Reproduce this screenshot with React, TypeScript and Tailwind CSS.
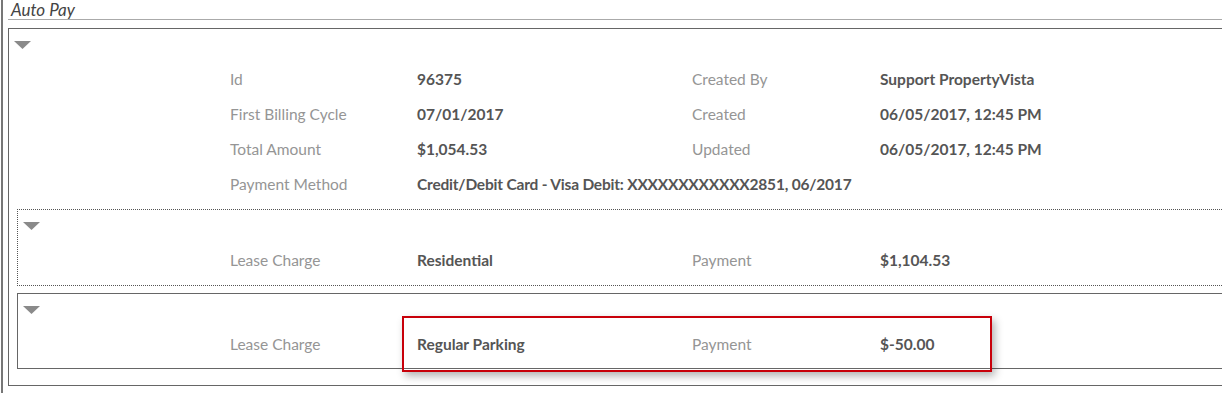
import React from "react";

const Tri = () => (
  <svg width="17" height="8" viewBox="0 0 17 8" className="block">
    <polygon points="0,0 17,0 8.5,8" fill="#8a8a8a" />
  </svg>
);

type Row = [string, string, string?, string?];

const Rows = ({ rows }: { rows: Row[] }) => (
  <div className="flex flex-col">
    {rows.map((r, i) => (
      <div key={i} className="flex h-[35px] items-center whitespace-nowrap text-[15.5px]">
        <div className="w-[187px] shrink-0 text-[#959595]">{r[0]}</div>
        {r[2] === undefined ? (
          <div className="font-bold tracking-[-0.2px] text-[#555]">{r[1]}</div>
        ) : (
          <>
            <div className="w-[275px] shrink-0 font-bold text-[#555]">{r[1]}</div>
            <div className="w-[188px] shrink-0 text-[#959595]">{r[2]}</div>
            <div className="font-bold text-[#555]">{r[3]}</div>
          </>
        )}
      </div>
    ))}
  </div>
);

export default function App() {
  return (
    <div className="relative w-[1222px] h-[393px] overflow-hidden bg-white font-['Lato','Liberation_Sans',sans-serif]">
      <div className="flex h-full">
        <div className="ml-[1px] w-[2px] h-full bg-[#777]" />
        <div className="flex-1 pl-[5px]">
          <div className="h-[20px] border-b border-[#aaa] pl-[3px] text-[17px] italic leading-[20px] text-[#444]">
            Auto Pay
          </div>
          <div className="mt-[8px] border border-r-0 border-[#666] pb-[16px]">
            <div className="pl-[5px] pt-[12px]">
              <Tri />
            </div>
            <div className="mt-[13px] pl-[221px]">
              <Rows
                rows={[
                  ["Id", "96375", "Created By", "Support PropertyVista"],
                  ["First Billing Cycle", "07/01/2017", "Created", "06/05/2017, 12:45 PM"],
                  ["Total Amount", "$1,054.53", "Updated", "06/05/2017, 12:45 PM"],
                  ["Payment Method", "Credit/Debit Card - Visa Debit: XXXXXXXXXXXX2851, 06/2017"],
                ]}
              />
            </div>
            <div className="ml-[8px] mt-[7px] border border-dotted border-r-0 border-[#555] pb-[7px]">
              <div className="pl-[5px] pt-[12px]">
                <Tri />
              </div>
              <div className="mt-[13px] pl-[212px]">
                <Rows rows={[["Lease Charge", "Residential", "Payment", "$1,104.53"]]} />
              </div>
            </div>
            <div className="ml-[8px] mt-[7px] border border-r-0 border-[#666] pb-[6px]">
              <div className="pl-[5px] pt-[12px]">
                <Tri />
              </div>
              <div className="mt-[13px] pl-[212px]">
                <Rows rows={[["Lease Charge", "Regular Parking", "Payment", "$-50.00"]]} />
              </div>
            </div>
          </div>
        </div>
      </div>
      <div className="absolute left-[402px] top-[316px] w-[590px] h-[56px] border-2 border-[#c8000a] shadow-[3px_4px_8px_rgba(0,0,0,0.3)]" />
    </div>
  );
}
